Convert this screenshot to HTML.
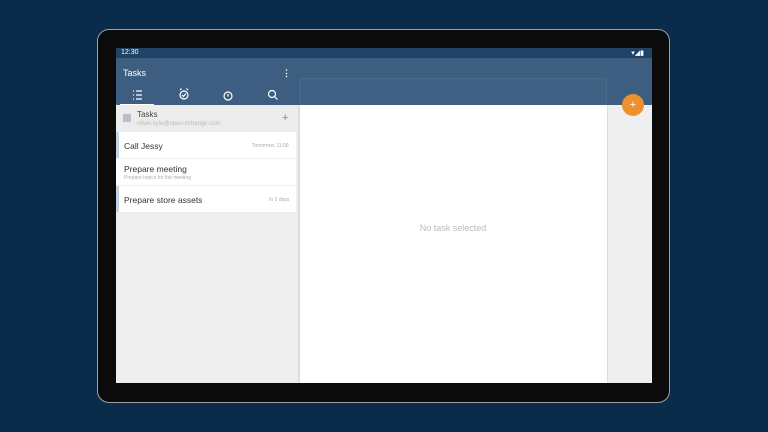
<!DOCTYPE html>
<html><head><style>
body{margin:0;width:768px;height:432px;background:#0a2b4a;position:relative;overflow:hidden;font-family:"Liberation Sans",sans-serif}
.a{position:absolute}
</style></head><body>
<div class="a" style="left:97px;top:29px;width:573px;height:374px;border-radius:12px;background:#0b0b0b;border:1px solid #9aa2aa;box-sizing:border-box"></div>
<div class="a" style="left:116px;top:48px;width:536px;height:335px;background:#efefef;overflow:hidden">
 <div class="a" style="left:0;top:0;width:536px;height:10px;background:#1f4265;color:#fff;font-size:7px;line-height:10px"><span style="margin-left:5px">12:30</span>
  <span class="a" style="right:8px;top:2px;font-size:7px;line-height:7px">▾◢▮</span></div>
 <div class="a" style="left:0;top:10px;width:536px;height:47px;background:#3d5e80"></div>
 <div class="a" style="left:7px;top:20px;color:#fff;font-size:9px">Tasks</div>
 <div class="a" style="left:166px;top:20px;color:#fff;font-size:9px;font-weight:bold">⋮</div>
 <div class="a" style="left:183px;top:30px;width:308px;height:27px;background:#3f6184;border:1px solid #47698a;border-bottom:none;box-sizing:border-box"></div>
 <svg class="a" style="left:0;top:38px" width="184" height="20" stroke="#fff" fill="none" stroke-width="1.2">
  <path d="M17 5h1M17 9h1M17 13h1M20 5h6M20 9h6M20 13h6"/>
  <circle cx="68" cy="9" r="4"/><path d="M66 9l1.5 1.5 2.5-3M64 4l1.5-1.5M72 4l-1.5-1.5"/>
  <circle cx="112" cy="10" r="4"/><path d="M112 8v2.5"/>
  <circle cx="156" cy="8" r="3.5"/><path d="M158.5 10.5l3 3"/>
  <path d="M4 19h34" stroke-width="2"/>
 </svg>
 <div class="a" style="left:0;top:57px;width:182px;height:278px;background:#efefef;border-right:1px solid #ddd"></div>
 <div class="a" style="left:0;top:57px;width:182px;height:26px;background:#ececec"></div>
 <div class="a" style="left:7px;top:66px;width:8px;height:8px;background:#b6c0cb"></div>
 <div class="a" style="left:21px;top:62px;font-size:8px;color:#444">Tasks</div>
 <div class="a" style="left:21px;top:73px;font-size:6px;color:#bbb">oliver.kyle@open-xchange.com</div>
 <div class="a" style="left:166px;top:64px;font-size:11px;color:#888">+</div>
 <div class="a" style="left:0;top:84px;width:180px;height:26px;background:#fff;border-left:3px solid #c5d3e2;box-sizing:border-box"></div>
 <div class="a" style="left:8px;top:93px;font-size:8.5px;color:#333">Call Jessy</div>
 <div class="a" style="left:136px;top:95px;font-size:5px;color:#aaa">Tomorrow, 11:00</div>
 <div class="a" style="left:0;top:111px;width:180px;height:26px;background:#fff"></div>
 <div class="a" style="left:8px;top:116px;font-size:8.5px;color:#333">Prepare meeting</div>
 <div class="a" style="left:8px;top:127px;font-size:5px;color:#aaa">Prepare topics for the meeting</div>
 <div class="a" style="left:0;top:138px;width:180px;height:26px;background:#fff;border-left:3px solid #c5d3e2;box-sizing:border-box"></div>
 <div class="a" style="left:8px;top:147px;font-size:8.5px;color:#333">Prepare store assets</div>
 <div class="a" style="left:153px;top:149px;font-size:5px;color:#aaa">In 3 days</div>
 <div class="a" style="left:183px;top:57px;width:309px;height:278px;background:#fff;border-left:1px solid #ddd;border-right:1px solid #ddd;box-sizing:border-box"></div>
 <div class="a" style="left:183px;top:175px;width:308px;text-align:center;font-size:9px;color:#bbb">No task selected</div>
 <div class="a" style="left:506px;top:46px;width:22px;height:22px;border-radius:50%;background:#ee902d;color:#fff;font-size:11px;line-height:22px;text-align:center">+</div>
</div>
</body></html>
